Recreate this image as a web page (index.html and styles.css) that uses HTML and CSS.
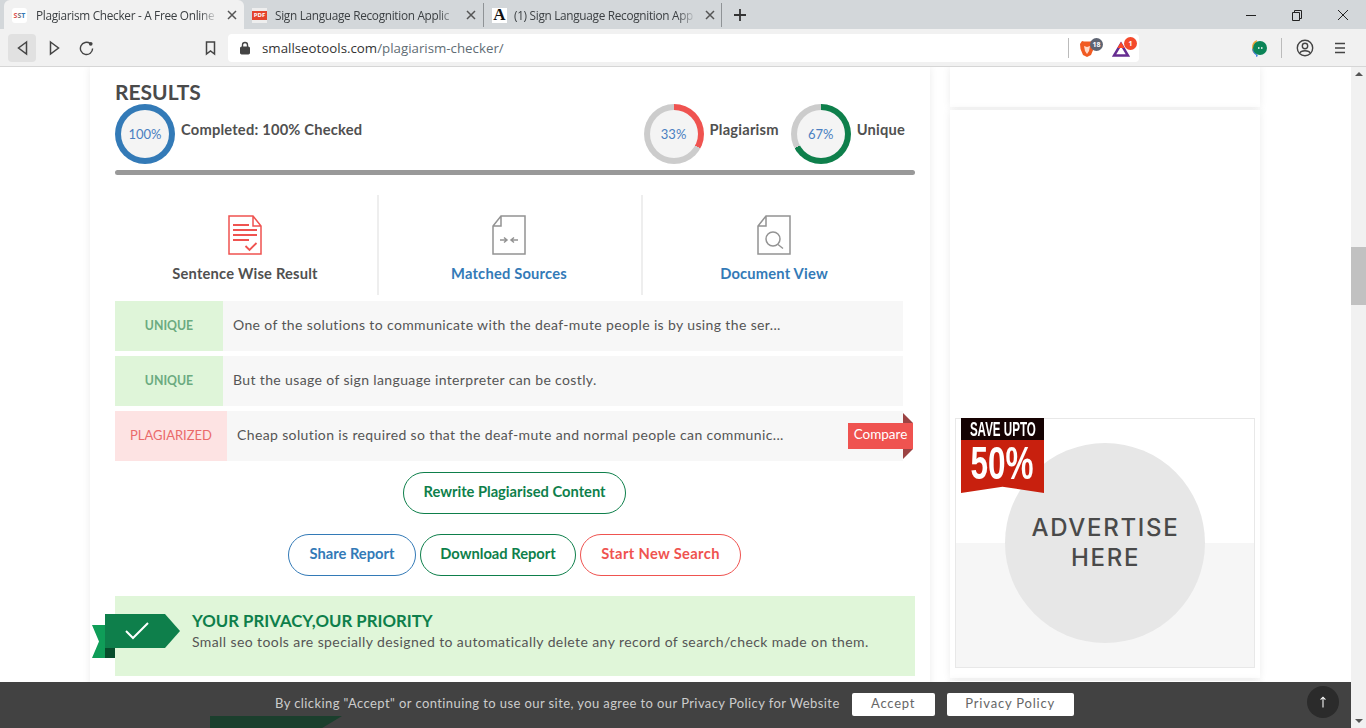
FILE: index.html
```html
<!DOCTYPE html>
<html lang="en">
<head>
  <meta charset="UTF-8">
  <title>Plagiarism Checker - A Free Online Plagiarism Detector</title>
  <link rel="stylesheet" href="styles.css">
</head>
<body>
  <!-- Browser tabs -->
  <div class="tabstrip">
    <div class="tab tab-active">
      <span class="favicon favicon-sst"><span class="sst-s">S</span>S<span class="sst-t">T</span></span>
      <span class="tab-title">Plagiarism Checker - A Free Online</span>
      <svg class="tab-close" viewBox="0 0 10 10"><path d="M1 1l8 8M9 1l-8 8"/></svg>
    </div>
    <div class="tab">
      <span class="favicon favicon-pdf">PDF</span>
      <span class="tab-title">Sign Language Recognition Applic</span>
      <svg class="tab-close" viewBox="0 0 10 10"><path d="M1 1l8 8M9 1l-8 8"/></svg>
    </div>
    <div class="tab tab-sep">
      <span class="favicon favicon-a">A</span>
      <span class="tab-title">(1) Sign Language Recognition App</span>
      <svg class="tab-close" viewBox="0 0 10 10"><path d="M1 1l8 8M9 1l-8 8"/></svg>
    </div>
    <svg class="tab-new" viewBox="0 0 14 14"><path d="M7 1v12M1 7h12"/></svg>
    <div class="win-controls">
      <svg viewBox="0 0 12 12"><path d="M1 6.5h10"/></svg>
      <svg viewBox="0 0 12 12"><path d="M1.5 3.5h7v8h-7zM3.5 3.5v-2h7v8h-2"/></svg>
      <svg viewBox="0 0 12 12"><path d="M1 1l10 10M11 1l-10 10"/></svg>
    </div>
  </div>

  <!-- Browser toolbar -->
  <div class="toolbar">
    <div class="tool-btn tool-back">
      <svg viewBox="0 0 14 16"><path d="M11 2L3 8l8 6z"/></svg>
    </div>
    <div class="tool-btn">
      <svg viewBox="0 0 14 16"><path d="M3 2l8 6-8 6z"/></svg>
    </div>
    <div class="tool-btn">
      <svg viewBox="0 0 16 16"><path d="M14.5 8.5a6.500 6.500 0 1 1-2.500-5.200"/><circle class="fill" cx="12.500" cy="3.500" r="2"/></svg>
    </div>
    <div class="tool-btn tool-bookmark">
      <svg viewBox="0 0 14 16"><path d="M3 2h8v12l-4-3-4 3z"/></svg>
    </div>
    <div class="urlbar">
      <svg class="lock" viewBox="0 0 12 14"><rect x="1.5" y="6" width="9" height="7" rx="1"/><path class="open" d="M3.5 6V4a2.5 2.5 0 0 1 5 0v2"/></svg>
      <span class="url"><span class="url-host">smallseotools.com</span>/plagiarism-checker/</span>
      <span class="url-sep"></span>
      <span class="ext ext-brave">
        <svg viewBox="0 0 16 18"><path fill="#f15a22" d="M3 1l2 .5h6L13 1l2 3-.5 5-2.500 6-4 2-4-2-2.500-6L1 4z"/><path fill="#ffd9c9" d="M5 6l3 1 3-1-1 5-2 3-2-3z"/></svg>
        <span class="badge badge-grey">18</span>
      </span>
      <span class="ext ext-bat">
        <svg viewBox="0 0 18 16"><path fill="none" stroke="#662d91" stroke-width="2.500" d="M9 3l7 11.500H2z"/><path fill="#ff4724" d="M9 1l3.500 6h-7z"/></svg>
        <span class="badge badge-red">1</span>
      </span>
    </div>
    <div class="toolbar-right">
      <svg class="ext-round" viewBox="0 0 16 18"><path fill="#f2a33a" d="M6 1a8 8 0 0 0-5 8c0 3 1 5 3 6z"/><path fill="#3d7fe0" d="M1 9c0 3 2 6 4 7v2l2-1z"/><circle fill="#0b8457" cx="9" cy="9" r="7"/><path stroke="#fff" stroke-width="1.300" d="M7 9h1.500M10 9h1.500"/></svg>
      <span class="tool-sep"></span>
      <svg class="tool-profile" viewBox="0 0 18 18"><circle cx="9" cy="9" r="7.700"/><circle cx="9" cy="7" r="2.700"/><path d="M4 14c1-3 9-3 10 0"/></svg>
      <svg class="tool-menu" viewBox="0 0 12 12"><path d="M1 1.500h10M1 6h10M1 10.500h10"/></svg>
    </div>
  </div>

  <div class="viewport">
    <div class="page">
      <!-- Main results card -->
      <main class="main-card">
        <h2 class="results-title">RESULTS</h2>
        <div class="progress-row">
          <div class="ring-item">
            <div class="ring ring-full"><span>100%</span></div>
            <span class="ring-label">Completed: 100% Checked</span>
          </div>
          <div class="ring-item ring-item-plag">
            <div class="ring ring-plag"><span>33%</span></div>
            <span class="ring-label">Plagiarism</span>
          </div>
          <div class="ring-item">
            <div class="ring ring-unique"><span>67%</span></div>
            <span class="ring-label">Unique</span>
          </div>
        </div>
        <div class="progress-bar"></div>

        <div class="view-tabs">
          <div class="view-tab">
            <svg viewBox="0 0 34 40" class="icon-red">
              <path d="M1 1h24l8 10v28H1zM25 1v10h8"/>
              <path class="icon-lines" d="M5 10h16M5 15h24M5 20h24M5 25h16"/>
              <path class="icon-lines" d="M17.500 31l4 4 7-7"/>
            </svg>
            <span class="view-label view-label-dark">Sentence Wise Result</span>
          </div>
          <div class="view-tab">
            <svg viewBox="0 0 34 40" class="icon-grey">
              <path d="M9 1h24v38H1V11zM9 1v10H1"/>
              <path d="M8 25h7M12 22.500l3 2.500-3 2.500M26 25h-7M22 22.500l-3 2.500 3 2.500"/>
            </svg>
            <span class="view-label">Matched Sources</span>
          </div>
          <div class="view-tab">
            <svg viewBox="0 0 34 40" class="icon-grey">
              <path d="M9 1h24v38H1V11zM9 1v10H1"/>
              <circle cx="16" cy="24" r="7"/>
              <path d="M21 29.500l5 4"/>
            </svg>
            <span class="view-label">Document View</span>
          </div>
        </div>

        <div class="sentence sentence-unique">
          <span class="sentence-tag">UNIQUE</span>
          <span class="sentence-text">One of the solutions to communicate with the deaf-mute people is by using the ser...</span>
        </div>
        <div class="sentence sentence-unique">
          <span class="sentence-tag">UNIQUE</span>
          <span class="sentence-text">But the usage of sign language interpreter can be costly.</span>
        </div>
        <div class="sentence sentence-plag">
          <span class="sentence-tag">PLAGIARIZED</span>
          <span class="sentence-text">Cheap solution is required so that the deaf-mute and normal people can communic...</span>
          <span class="compare">Compare</span>
        </div>

        <div class="action-row action-rewrite">
          <a class="pill pill-green pill-rewrite">Rewrite Plagiarised Content</a>
        </div>
        <div class="action-row action-report">
          <a class="pill pill-blue pill-share">Share Report</a>
          <a class="pill pill-green pill-download">Download Report</a>
          <a class="pill pill-red pill-search">Start New Search</a>
        </div>

        <div class="privacy">
          <div class="ribbon">
            <span class="ribbon-tail"></span>
            <span class="ribbon-fold"></span>
            <span class="ribbon-body">
              <svg viewBox="0 0 26 20"><path d="M2 10l7 7L24 2"/></svg>
            </span>
          </div>
          <div class="privacy-text">
            <h3>YOUR PRIVACY,OUR PRIORITY</h3>
            <p>Small seo tools are specially designed to automatically delete any record of search/check made on them.</p>
          </div>
        </div>
      </main>

      <!-- Sidebar -->
      <aside class="sidebar">
        <div class="side-card side-card-top"></div>
        <div class="side-card side-card-ad">
          <div class="ad-box">
            <div class="ad-circle">ADVERTISE<br>HERE</div>
            <div class="ad-badge">
              <span class="ad-save"><span>SAVE UPTO</span></span>
              <span class="ad-off"><span>50%</span></span>
            </div>
          </div>
        </div>
        <div class="side-card side-card-next"></div>
      </aside>
    </div>

    <!-- Scrollbar -->
    <div class="scrollbar">
      <span class="arrow arrow-up"></span>
      <span class="thumb"></span>
      <span class="arrow arrow-down"></span>
    </div>

    <!-- Cookie bar -->
    <div class="cookie-bar">
      <span class="peek"></span>
      <span class="cookie-text">By clicking "Accept" or continuing to use our site, you agree to our Privacy Policy for Website</span>
      <a class="cookie-btn cookie-accept">Accept</a>
      <a class="cookie-btn cookie-policy">Privacy Policy</a>
      <span class="to-top">
        <svg viewBox="0 0 10 16"><path d="M5 15V2M2 5l3-3 3 3"/></svg>
      </span>
    </div>
  </div>
</body>
</html>
```

FILE: styles.css
```css
/* General Styles */
* {
  box-sizing: border-box;
}

html,
body {
  margin: 0;
  padding: 0;
  height: 728px;
  overflow: hidden;
}

body {
  font-family: 'Lato', 'Open Sans', sans-serif;
  color: #444;
  background-color: #fff;
}

/* Browser Tabs */
.tabstrip {
  height: 29px;
  background-color: #d3d7da;
  display: flex;
  align-items: stretch;
  padding-left: 4px;
  font-family: 'Open Sans', sans-serif;
  font-size: 11.8px;
  letter-spacing: -0.3px;
  color: #3c4043;
}

.tab {
  width: 239px;
  display: flex;
  align-items: center;
  padding: 1px 7px 0 8px;
}

.tab-active {
  width: 240px;
  background-color: #f1f1f1;
  border-radius: 6px 6px 0 0;
}

.tab-sep {
  border-left: 1px solid #8f9396;
  border-right: 1px solid #8f9396;
  height: 24px;
  margin-top: 3px;
  padding-top: 0;
  padding-right: 6px;
}

.favicon {
  width: 15px;
  height: 15px;
  flex: none;
  margin-right: 9px;
  display: flex;
  align-items: center;
  justify-content: center;
  font-weight: 700;
  letter-spacing: 0;
}

.favicon-sst {
  background-color: #fff;
  color: #777;
  font-size: 7px;
  border-radius: 3px;
}

.sst-s {
  color: #d9534f;
}

.sst-t {
  color: #337ab7;
}

.favicon-pdf {
  background: linear-gradient(#eee 0 22%, #e4442d 22% 78%, #eee 78%);
  color: #fff;
  font-size: 6px;
  margin-right: 8px;
}

.favicon-a {
  background-color: #fff;
  color: #111;
  font-family: 'Liberation Serif', serif;
  font-size: 17px;
  margin-right: 7px;
}

.tab-title {
  flex: 1;
  white-space: nowrap;
  overflow: hidden;
  -webkit-mask-image: linear-gradient(to right, #000 90%, transparent);
  mask-image: linear-gradient(to right, #000 90%, transparent);
}

.tab-close {
  width: 10px;
  height: 10px;
  flex: none;
  margin-left: 9px;
  fill: none;
  stroke: #555;
  stroke-width: 1.5;
}

.tab-new {
  width: 14px;
  height: 14px;
  margin: 8px 0 0 11px;
  fill: none;
  stroke: #333;
  stroke-width: 1.8;
}

.win-controls {
  margin-left: auto;
  display: flex;
  align-items: center;
  gap: 34px;
  padding-right: 17px;
}

.win-controls svg {
  width: 12px;
  height: 12px;
  fill: none;
  stroke: #222;
  stroke-width: 1;
}

/* Browser Toolbar */
.toolbar {
  height: 38px;
  background-color: #f1f1f1;
  border-bottom: 1px solid #d6d6d6;
  display: flex;
  align-items: flex-start;
  padding: 5px 0 0 8px;
}

.tool-btn {
  width: 28px;
  height: 28px;
  display: flex;
  align-items: center;
  justify-content: center;
  margin-right: 4px;
  border-radius: 4px;
}

.tool-btn svg {
  width: 15px;
  height: 16px;
  fill: none;
  stroke: #444;
  stroke-width: 1.5;
}

.tool-btn svg .fill {
  fill: #444;
  stroke: none;
}

.tool-back {
  background-color: #e1e1e1;
}

.tool-bookmark {
  margin-left: 92px;
  margin-right: 4px;
}

.urlbar {
  width: 911px;
  height: 28px;
  background-color: #fff;
  border-radius: 4px;
  display: flex;
  align-items: center;
  padding-left: 11px;
  font-family: 'Open Sans', sans-serif;
  font-size: 13.3px;
  color: #5f6d75;
}

.lock {
  width: 12px;
  height: 14px;
  margin-right: 11px;
  fill: #444;
  stroke: #444;
  flex: none;
}

.lock .open {
  fill: none;
  stroke-width: 1.4;
}

.url {
  flex: none;
  width: 806px;
}

.url-host {
  color: #333;
}

.url-sep {
  width: 1px;
  height: 20px;
  background-color: #bbb;
  flex: none;
}

.ext {
  position: relative;
  display: block;
  flex: none;
}

.ext svg {
  display: block;
  width: 100%;
  height: 100%;
}

.ext-brave {
  width: 16px;
  height: 18px;
  margin-left: 10px;
  margin-top: 2px;
}

.ext-bat {
  width: 18px;
  height: 16px;
  margin-left: 17px;
  margin-top: 2px;
}

.badge {
  position: absolute;
  top: -2px;
  left: 11px;
  height: 13px;
  min-width: 13px;
  border-radius: 7px;
  font-size: 7px;
  font-weight: 700;
  line-height: 13px;
  text-align: center;
  color: #fff;
  padding: 0 1px;
}

.badge-grey {
  background-color: #5e6472;
}

.badge-red {
  background-color: #f4492b;
  top: -4px;
  left: 12px;
}

.toolbar-right {
  display: flex;
  align-items: center;
  height: 28px;
  margin-left: 112px;
}

.ext-round {
  width: 16px;
  height: 18px;
}

.tool-sep {
  width: 1px;
  height: 20px;
  background-color: #bbb;
  margin: 0 14px;
}

.tool-profile {
  width: 18px;
  height: 18px;
  fill: none;
  stroke: #444;
  stroke-width: 1.4;
}

.tool-menu {
  width: 12px;
  height: 12px;
  margin-left: 20px;
  fill: none;
  stroke: #444;
  stroke-width: 1.4;
}

/* Page */
.viewport {
  position: relative;
  height: 661px;
  display: flex;
  overflow: hidden;
  background-color: #fff;
}

.page {
  flex: 1;
  display: flex;
  align-items: flex-start;
  padding-left: 90px;
}

.main-card {
  width: 840px;
  height: 622px;
  padding: 13px 15px 0 25px;
  background-color: #fff;
  box-shadow: 0 0 8px rgba(0, 0, 0, 0.08);
}

.results-title {
  margin: 0;
  font-size: 21px;
  font-weight: 700;
  line-height: 24px;
  color: #4a4a4a;
}

.progress-row {
  display: flex;
  height: 60px;
  padding-right: 10px;
}

.ring-item {
  display: flex;
  align-items: flex-start;
}

.ring-item-plag {
  margin-left: auto;
  margin-right: 12px;
}

.ring-label {
  margin: 16px 0 0 6px;
  font-size: 14.7px;
  font-weight: 700;
  line-height: 18px;
  color: #505050;
  letter-spacing: 0.2px;
}

.ring {
  --val: 0%;
  --col: #ccc;
  position: relative;
  width: 60px;
  height: 60px;
  flex: none;
  border-radius: 50%;
  display: flex;
  align-items: center;
  justify-content: center;
  background: conic-gradient(var(--col) var(--val), #ccc var(--val));
  font-size: 13px;
  color: #4a7fc1;
}

.ring::before {
  content: "";
  position: absolute;
  inset: 6px;
  border-radius: 50%;
  background-color: #f4f4f4;
}

.ring span {
  position: relative;
}

.ring-full {
  --val: 100%;
  --col: #337ab7;
}

.ring-plag {
  --val: 33%;
  --col: #ef5350;
}

.ring-unique {
  --val: 67%;
  --col: #0e7f4b;
}

.progress-bar {
  height: 5px;
  margin-top: 6px;
  background-color: #999;
  border-radius: 3px;
}

/* View Tabs */
.view-tabs {
  display: flex;
  margin-top: 20px;
  height: 100px;
}

.view-tab {
  width: 264px;
  display: flex;
  flex-direction: column;
  align-items: center;
  padding: 20px 2px 0 0;
  border-right: 2px solid #eee;
}

.view-tab:last-child {
  border-right: 0;
  width: 272px;
  padding-right: 10px;
}

.view-tab svg {
  width: 34px;
  height: 40px;
  fill: none;
  stroke-width: 1.5;
}

.icon-red {
  stroke: #ef5350;
}

.icon-grey {
  stroke: #939393;
}

.icon-lines {
  stroke-width: 1.8;
}

.view-label {
  margin-top: 9px;
  font-size: 14.7px;
  font-weight: 700;
  line-height: 18px;
  color: #337ab7;
  letter-spacing: 0.2px;
}

.view-label-dark {
  color: #505050;
}

/* Sentence Rows */
.sentence {
  position: relative;
  width: 788px;
  height: 50px;
  margin-top: 5px;
  display: flex;
  align-items: center;
  background-color: #f7f7f7;
  font-size: 14px;
}

.view-tabs + .sentence {
  margin-top: 6px;
}

.sentence-tag {
  height: 100%;
  display: flex;
  align-items: center;
  justify-content: center;
  width: 108px;
  padding-bottom: 1px;
  font-size: 12.3px;
  font-weight: 700;
}

.sentence-unique .sentence-tag {
  background-color: #dff5d9;
  color: #6bab80;
}

.sentence-plag .sentence-tag {
  width: 112px;
  padding-bottom: 2px;
  background-color: #fde3e3;
  color: #ea6a6a;
  font-size: 13px;
  font-weight: 400;
}

.sentence-text {
  margin-left: 10px;
  padding-bottom: 3px;
  color: #555;
  letter-spacing: 0.37px;
  white-space: nowrap;
}

.compare {
  position: absolute;
  top: 12px;
  right: -10px;
  width: 65px;
  height: 26px;
  background-color: #ef5350;
  color: #fff;
  font-size: 13.5px;
  line-height: 23px;
  text-align: center;
}

.compare::before,
.compare::after {
  content: "";
  position: absolute;
  right: 0;
  width: 10px;
  height: 10px;
  background-color: #9b4343;
}

.compare::before {
  top: -10px;
  clip-path: polygon(0 0, 100% 100%, 0 100%);
}

.compare::after {
  bottom: -10px;
  clip-path: polygon(0 0, 100% 0, 0 100%);
}

/* Buttons */
.action-row {
  display: flex;
  justify-content: center;
  gap: 4px;
  width: 799px;
}

.action-rewrite {
  margin-top: 11px;
}

.action-report {
  margin-top: 20px;
}

.pill {
  height: 42px;
  padding-bottom: 4px;
  border: 1px solid;
  border-radius: 21px;
  display: flex;
  align-items: center;
  justify-content: center;
  font-size: 14.7px;
  font-weight: 700;
  white-space: nowrap;
}

.pill-rewrite {
  width: 223px;
}

.pill-share {
  width: 128px;
}

.pill-download {
  width: 156px;
}

.pill-search {
  width: 161px;
  letter-spacing: 0.35px;
}

.pill-green {
  color: #0e7f4b;
  border-color: #0e7f4b;
}

.pill-blue {
  color: #337ab7;
  border-color: #337ab7;
}

.pill-red {
  color: #ef5350;
  border-color: #ef5350;
}

/* Privacy Box */
.privacy {
  position: relative;
  width: 800px;
  height: 80px;
  margin-top: 20px;
  padding: 16px 0 0 77px;
  background-color: #e0f6d9;
}

.privacy-text h3 {
  margin: 0;
  font-size: 16.8px;
  font-weight: 700;
  line-height: 18px;
  color: #0e7f4b;
}

.privacy-text p {
  margin: 3px 0 0;
  font-size: 14px;
  line-height: 18px;
  color: #555;
  letter-spacing: 0.4px;
  white-space: nowrap;
}

.ribbon {
  position: absolute;
  left: -23px;
  top: 18px;
  width: 88px;
  height: 44px;
}

.ribbon-tail {
  position: absolute;
  left: 0;
  top: 11px;
  width: 14px;
  height: 33px;
  background-color: #0f9d58;
  clip-path: polygon(0 0, 100% 0, 100% 100%, 0 100%, 50% 50%);
}

.ribbon-fold {
  position: absolute;
  left: 13px;
  top: 34px;
  width: 10px;
  height: 10px;
  background-color: #074d2c;
}

.ribbon-body {
  position: absolute;
  left: 13px;
  top: 0;
  width: 75px;
  height: 34px;
  display: flex;
  align-items: center;
  padding-left: 19px;
  background-color: #0e7f4b;
  clip-path: polygon(0 0, 80% 0, 100% 50%, 80% 100%, 0 100%);
}

.ribbon-body svg {
  width: 26px;
  height: 20px;
  fill: none;
  stroke: #fff;
  stroke-width: 2;
}

/* Sidebar */
.sidebar {
  width: 310px;
  margin-left: 20px;
  display: flex;
  flex-direction: column;
  gap: 3px;
}

.side-card {
  background-color: #fff;
  box-shadow: 0 0 8px rgba(0, 0, 0, 0.08);
}

.side-card-top {
  height: 40px;
}

.side-card-ad {
  height: 568px;
  padding: 308px 5px 0;
}

.side-card-next {
  height: 60px;
}

.ad-box {
  position: relative;
  width: 300px;
  height: 250px;
  display: flex;
  align-items: center;
  justify-content: center;
  border: 1px solid #e8e8e8;
  background: linear-gradient(to bottom, #fff 50%, #f6f6f6 50%);
}

.ad-circle {
  width: 200px;
  height: 200px;
  padding-left: 1px;
  border-radius: 50%;
  background-color: #e7e7e7;
  display: flex;
  align-items: center;
  justify-content: center;
  text-align: center;
  font-family: 'Inter', sans-serif;
  font-size: 24px;
  font-weight: 500;
  line-height: 30px;
  letter-spacing: 1.7px;
  color: #4a4a4a;
}

.ad-badge {
  position: absolute;
  top: -1px;
  left: 5px;
  width: 83px;
  height: 75px;
  color: #fff;
  font-family: 'Liberation Sans', sans-serif;
  font-weight: 700;
}

.ad-save {
  height: 22px;
  display: flex;
  align-items: center;
  justify-content: center;
  background-color: #150202;
  font-size: 20px;
  line-height: 20px;
}

.ad-save span {
  display: block;
  white-space: nowrap;
  transform: scaleX(0.58);
}

.ad-off {
  height: 53px;
  display: flex;
  justify-content: center;
  background-color: #c8200e;
  font-size: 47px;
  line-height: 46px;
  clip-path: polygon(0 0, 100% 0, 100% 100%, 50% 88%, 0 100%);
}

.ad-off span {
  display: block;
  transform: scaleX(0.67);
}

/* Scrollbar */
.scrollbar {
  position: relative;
  width: 15px;
  flex: none;
  background-color: #f1f1f1;
}

.thumb {
  position: absolute;
  top: 180px;
  left: 0;
  width: 15px;
  height: 58px;
  background-color: #c1c1c1;
}

.arrow {
  position: absolute;
  left: 4px;
  border-left: 4px solid transparent;
  border-right: 4px solid transparent;
}

.arrow-up {
  top: 5px;
  border-bottom: 4px solid #555;
}

.arrow-down {
  bottom: 5px;
  border-top: 4px solid #555;
}

/* Cookie Bar */
.cookie-bar {
  position: absolute;
  left: 0;
  bottom: 0;
  width: 1351px;
  height: 46px;
  display: flex;
  align-items: center;
  background-color: rgba(50, 50, 50, 0.92);
  padding: 0 0 4px 275px;
  font-size: 13px;
  letter-spacing: 0.41px;
  color: #ccc;
}

.cookie-text {
  white-space: nowrap;
}

.cookie-btn {
  height: 23px;
  margin-top: 3px;
  background-color: #fff;
  border-radius: 2px;
  color: #666;
  line-height: 21px;
  text-align: center;
  letter-spacing: 0.8px;
}

.cookie-accept {
  width: 83px;
  margin-left: 12px;
}

.cookie-policy {
  width: 127px;
  margin-left: 12px;
}

.to-top {
  position: absolute;
  top: 4px;
  left: 1307px;
  width: 32px;
  height: 32px;
  border-radius: 50%;
  background-color: #2b2b2b;
  display: flex;
  align-items: center;
  justify-content: center;
}

.to-top svg {
  width: 8px;
  height: 14px;
  fill: none;
  stroke: #fff;
  stroke-width: 1.3;
}

.peek {
  position: absolute;
  left: 210px;
  bottom: 0;
  width: 132px;
  height: 12px;
  background-color: #1b3f2d;
  clip-path: polygon(0 0, 100% 0, 85% 100%, 0 100%);
}
```
